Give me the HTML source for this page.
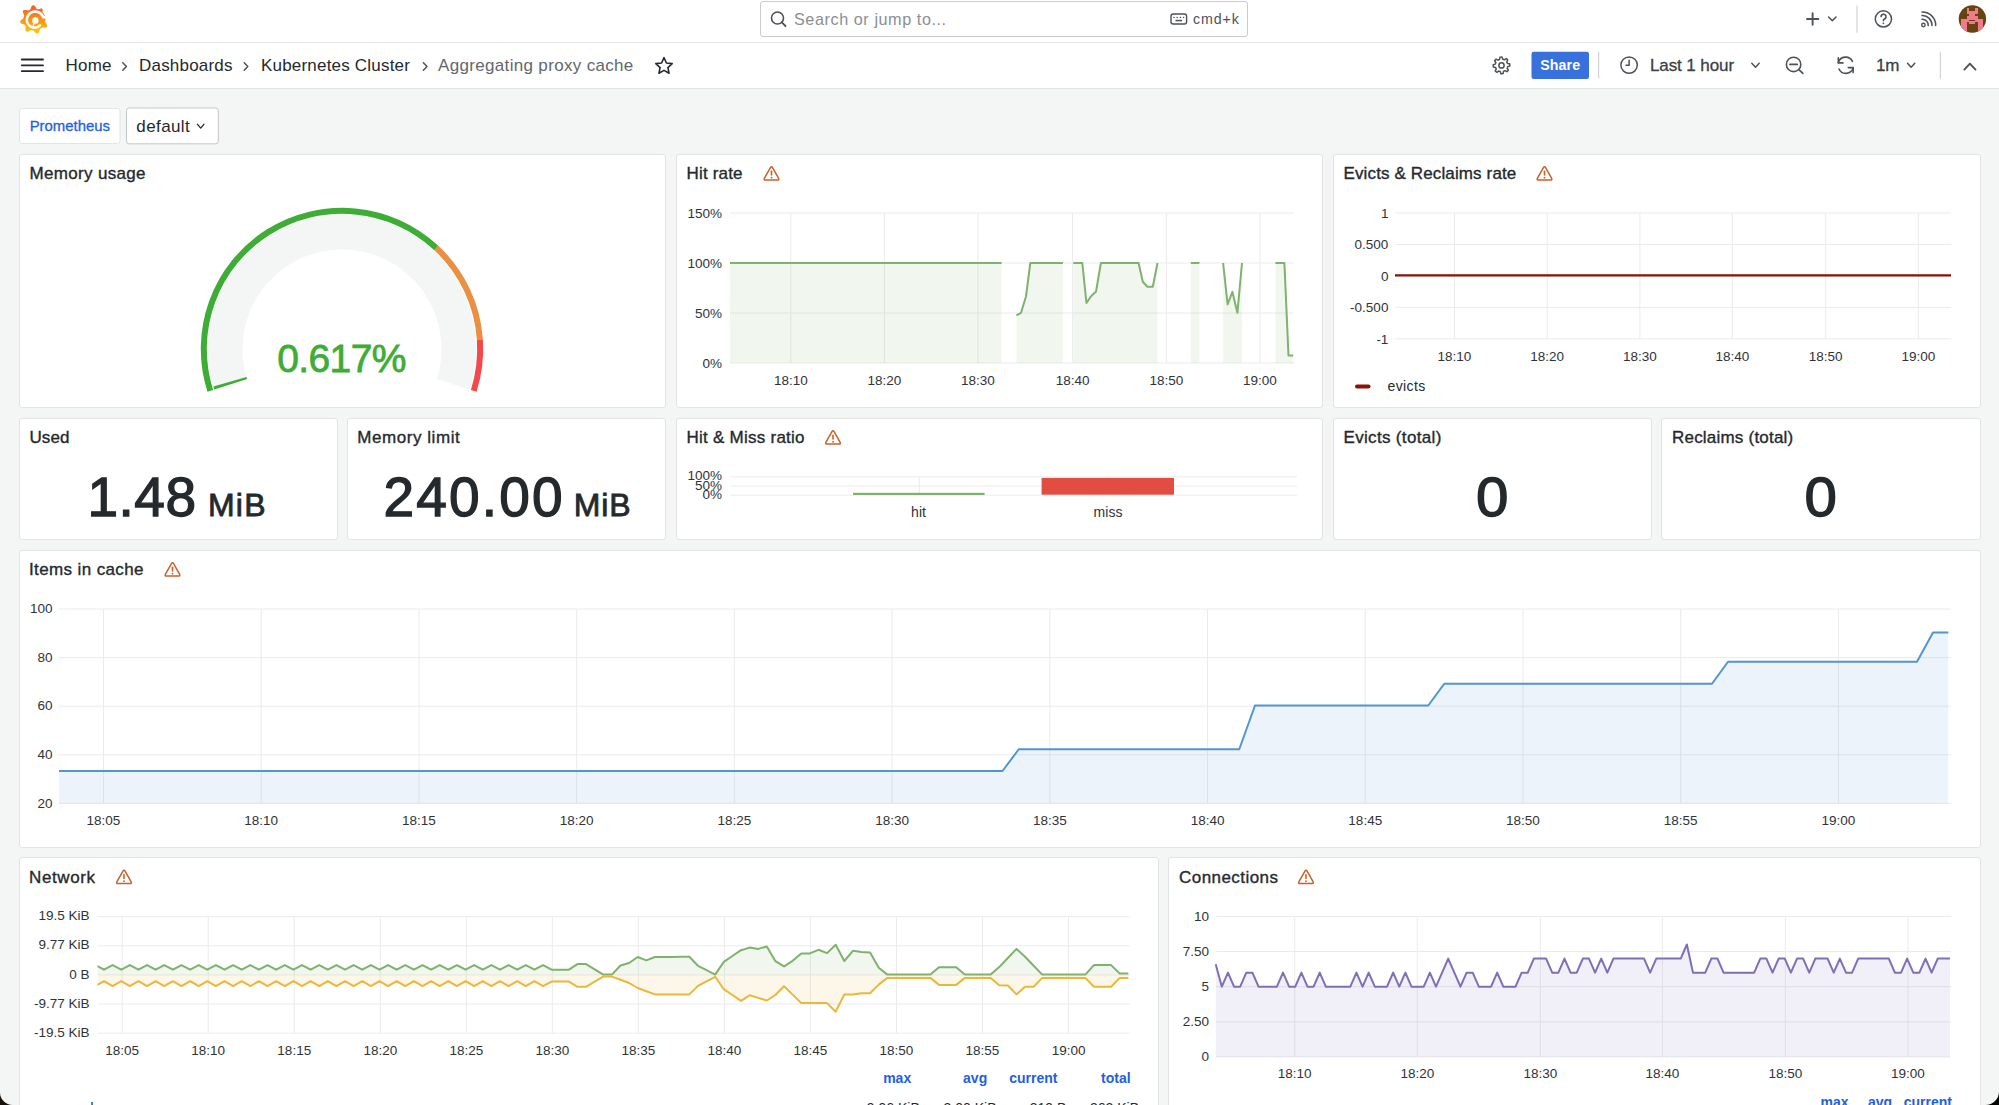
<!DOCTYPE html>
<html><head><meta charset="utf-8"><title>Aggregating proxy cache - Dashboards - Grafana</title>
<style>
html,body{margin:0;padding:0}
body{width:1999px;height:1105px;overflow:hidden;background:#f4f5f5;position:relative;font-family:"Liberation Sans",sans-serif}
svg text{font-family:"Liberation Sans",sans-serif}
.ttl{stroke:#24292e;stroke-width:0.35px}
</style></head><body>
<svg width="1999" height="1105" viewBox="0 0 1999 1105" style="position:absolute;left:0;top:0"><rect x="0" y="0" width="1999" height="89" fill="#fff"/><line x1="0" y1="42.5" x2="1999" y2="42.5" stroke="#e3e4e6" stroke-width="1"/><line x1="0" y1="88.5" x2="1999" y2="88.5" stroke="#e3e4e6" stroke-width="1"/><defs><linearGradient id="lg" x1="0" y1="0" x2="0" y2="1"><stop offset="0" stop-color="#f05a28"/><stop offset="1" stop-color="#fbca0a"/></linearGradient></defs><polygon points="21.73,19.60 22.02,19.38 22.31,19.18 22.60,18.98 22.87,18.79 23.13,18.61 23.34,18.44 23.48,18.26 23.51,18.07 23.54,17.88 23.57,17.69 23.60,17.50 23.64,17.31 23.68,17.13 23.73,16.94 23.77,16.75 23.83,16.57 23.88,16.38 23.94,16.20 24.00,16.02 24.06,15.84 24.13,15.66 24.20,15.48 24.16,15.25 24.06,15.00 23.93,14.72 23.78,14.42 23.62,14.11 23.46,13.79 23.32,13.46 23.18,13.12 23.06,12.79 22.97,12.46 22.90,12.13 22.87,11.82 22.86,11.52 22.90,11.24 22.96,10.98 23.07,10.75 23.21,10.54 23.38,10.36 23.59,10.21 23.83,10.09 24.10,10.00 24.39,9.94 24.71,9.91 25.04,9.90 25.38,9.93 25.73,9.97 26.09,10.04 26.44,10.11 26.79,10.20 27.12,10.29 27.45,10.37 27.75,10.44 28.02,10.49 28.25,10.48 28.41,10.37 28.57,10.27 28.73,10.17 28.90,10.07 29.07,9.98 29.24,9.89 29.41,9.80 29.58,9.71 29.75,9.63 29.93,9.55 30.10,9.47 30.28,9.40 30.41,9.22 30.53,8.97 30.64,8.68 30.75,8.36 30.86,8.03 30.99,7.70 31.12,7.36 31.27,7.03 31.42,6.71 31.60,6.42 31.78,6.14 31.98,5.90 32.20,5.69 32.42,5.52 32.65,5.39 32.90,5.30 33.14,5.25 33.40,5.26 33.65,5.30 33.90,5.39 34.15,5.52 34.40,5.69 34.64,5.89 34.87,6.13 35.09,6.39 35.30,6.68 35.50,6.97 35.69,7.28 35.87,7.59 36.04,7.90 36.21,8.19 36.37,8.45 36.52,8.68 36.69,8.84 36.87,8.88 37.06,8.93 37.25,8.97 37.43,9.03 37.62,9.08 37.80,9.14 37.98,9.20 38.16,9.26 38.34,9.33 38.52,9.40 38.75,9.36 39.01,9.25 39.29,9.12 39.58,8.98 39.89,8.83 40.20,8.70 40.51,8.58 40.81,8.49 41.11,8.44 41.39,8.42 41.65,8.44 41.88,8.51 42.09,8.62 42.26,8.78 42.41,8.98 42.52,9.21 42.60,9.48 42.65,9.77 42.67,10.09 42.66,10.42 42.64,10.76 42.61,11.10 42.58,11.42 42.55,11.73 42.54,12.01 42.57,12.24 42.70,12.38 42.83,12.53 42.95,12.68 43.07,12.83 43.18,12.98 43.30,13.13 43.41,13.29 43.52,13.45 43.63,13.61 43.73,13.77 43.83,13.93 43.93,14.10 44.02,14.27 44.11,14.44 44.20,14.61 44.29,14.78 44.37,14.95 44.45,15.13 44.53,15.30 44.60,15.48 44.67,15.66 44.74,15.84 44.80,16.02 44.86,16.20 44.92,16.38 44.97,16.57 45.03,16.75 45.07,16.94 45.12,17.13 45.16,17.31 45.20,17.50 45.23,17.69 45.26,17.88 45.29,18.07 45.32,18.26 45.34,18.45 45.36,18.64 45.37,18.83 45.38,19.02 45.39,19.22 45.40,19.41 45.40,19.60 45.40,19.79 45.39,19.98 45.38,20.18 45.37,20.37 45.36,20.56 45.34,20.75 45.32,20.94 45.29,21.13 45.26,21.32 45.23,21.51 45.20,21.70 45.16,21.89 45.24,22.10 45.38,22.34 45.56,22.59 45.76,22.86 45.97,23.14 46.18,23.43 46.38,23.73 46.57,24.03 46.75,24.34 46.90,24.65 47.02,24.96 47.11,25.26 47.16,25.55 47.18,25.83 47.16,26.10 47.10,26.35 46.99,26.58 46.85,26.79 46.67,26.97 46.46,27.14 46.21,27.27 45.93,27.38 45.63,27.46 45.30,27.52 44.96,27.56 44.61,27.58 44.25,27.58 43.89,27.56 43.53,27.54 43.18,27.51 42.85,27.48 42.54,27.46 42.26,27.46 42.04,27.51 41.90,27.64 41.76,27.77 41.62,27.90 41.47,28.03 41.32,28.15 41.17,28.27 41.02,28.38 40.87,28.50 40.71,28.61 40.55,28.72 40.39,28.83 40.23,28.93 40.07,29.03 39.90,29.13 39.79,29.33 39.71,29.59 39.65,29.89 39.58,30.22 39.51,30.56 39.44,30.91 39.35,31.27 39.25,31.61 39.14,31.95 39.01,32.27 38.86,32.56 38.70,32.83 38.52,33.07 38.32,33.27 38.11,33.43 37.88,33.55 37.64,33.63 37.39,33.67 37.13,33.66 36.87,33.60 36.60,33.51 36.34,33.38 36.07,33.21 35.81,33.01 35.55,32.78 35.30,32.52 35.06,32.26 34.83,31.98 34.61,31.70 34.40,31.42 34.20,31.15 34.01,30.91 33.82,30.71 33.63,30.57 33.44,30.56 33.25,30.54 33.06,30.52 32.87,30.49 32.68,30.46 32.49,30.43 32.30,30.40 32.11,30.36 31.93,30.32 31.74,30.27 31.55,30.23 31.37,30.17 31.18,30.12 31.00,30.06 30.78,30.12 30.53,30.23 30.26,30.39 29.97,30.56 29.67,30.74 29.36,30.91 29.04,31.09 28.72,31.24 28.40,31.38 28.07,31.50 27.75,31.59 27.44,31.65 27.15,31.67 26.86,31.66 26.60,31.61 26.36,31.52 26.14,31.40 25.95,31.23 25.78,31.04 25.65,30.81 25.54,30.54 25.46,30.26 25.41,29.95 25.38,29.62 25.38,29.27 25.40,28.92 25.44,28.56 25.49,28.20 25.55,27.85 25.62,27.51 25.68,27.18 25.73,26.87 25.76,26.60 25.73,26.37 25.62,26.22 25.50,26.07 25.39,25.91 25.28,25.75 25.17,25.59 25.07,25.43 24.97,25.27 24.87,25.10 24.78,24.93 24.69,24.76 24.60,24.59 24.40,24.48 24.14,24.38 23.84,24.30 23.52,24.22 23.18,24.13 22.84,24.04 22.49,23.93 22.15,23.82 21.82,23.69 21.51,23.54 21.22,23.38 20.96,23.20 20.74,23.01 20.54,22.80 20.39,22.58 20.28,22.34 20.22,22.10 20.20,21.85 20.22,21.59 20.29,21.33 20.39,21.07 20.54,20.81 20.72,20.56 20.94,20.31 21.18,20.06 21.45,19.83" fill="url(#lg)"/><polyline points="47.13,17.40 43.17,17.31 43.04,16.96 42.89,16.62 42.73,16.29 42.56,15.96 42.37,15.64 42.16,15.33 41.95,15.03 41.72,14.74 41.48,14.46 41.23,14.19 40.96,13.93 40.69,13.68 40.41,13.45 40.11,13.23 39.81,13.02 39.50,12.82 39.18,12.64 38.86,12.47 38.53,12.32 38.19,12.18 37.85,12.06 37.50,11.95 37.15,11.85 36.80,11.78 36.44,11.71 36.08,11.67 35.72,11.63 35.36,11.62 35.00,11.61 34.64,11.63 34.29,11.66 33.93,11.70 33.58,11.76 33.23,11.84 32.88,11.93 32.54,12.03 32.20,12.15 31.87,12.28 31.55,12.43 31.23,12.59 30.92,12.76 30.62,12.95 30.33,13.15 30.05,13.36 29.77,13.58 29.51,13.82 29.26,14.06 29.02,14.32 28.79,14.58 28.57,14.86 28.36,15.14 28.17,15.43 27.99,15.73 27.82,16.03 27.67,16.35 27.53,16.67 27.40,16.99 27.29,17.32 27.19,17.65 27.11,17.98 27.04,18.32 26.98,18.66 26.94,19.01 26.92,19.35 26.91,19.69 26.92,20.03 26.93,20.38 26.97,20.72 27.02,21.06 27.08,21.39 27.16,21.72 27.25,22.05 27.36,22.37 27.47,22.69 27.61,23.00 27.75,23.31 27.91,23.61 28.08,23.90 28.26,24.18 28.46,24.46 28.66,24.72 28.88,24.98 29.11,25.22 29.34,25.46 29.59,25.69 29.85,25.90 30.11,26.10 30.38,26.29 30.66,26.47 30.95,26.64 31.24,26.79 31.54,26.93 31.85,27.06 32.16,27.18 32.47,27.28 32.79,27.36 33.11,27.44 33.43,27.50 33.76,27.54 34.08,27.57 34.41,27.59 34.73,27.59 35.06,27.58 35.38,27.56 35.71,27.52 36.03,27.47 36.34,27.40 36.66,27.32 36.97,27.23 37.27,27.12 37.57,27.01 37.87,26.87 38.15,26.73 38.43,26.58 38.71,26.41 38.97,26.23 39.23,26.04 39.48,25.84 39.72,25.63 39.95,25.41" fill="none" stroke="#fff" stroke-width="2.6" stroke-linecap="round" stroke-linejoin="round"/><circle cx="35.4" cy="20.5" r="3.2" fill="#fff"/><line x1="33.96605890912238" y1="22.54788011072248" x2="33.22728175818771" y2="25.877666356487367" stroke="#fff" stroke-width="1.3"/><rect x="760.5" y="1.5" width="487" height="35" rx="2.5" fill="#fff" stroke="#c9cacc" stroke-width="1"/><circle cx="777.5" cy="18" r="6" fill="none" stroke="#4d5258" stroke-width="1.6"/><line x1="781.8" y1="22.3" x2="785.5" y2="26" stroke="#4d5258" stroke-width="1.8" stroke-linecap="round"/><text x="794" y="24.7" font-size="16.2" fill="#8b8e93" text-anchor="start" font-weight="400" letter-spacing="0.57" >Search or jump to...</text><rect x="1171" y="14" width="15.6" height="10" rx="2.2" fill="none" stroke="#4d5258" stroke-width="1.4"/><rect x="1173.3000000000002" y="16.8" width="1.3" height="1.3" fill="#4d5258"/><rect x="1176.5" y="16.8" width="1.3" height="1.3" fill="#4d5258"/><rect x="1179.7" y="16.8" width="1.3" height="1.3" fill="#4d5258"/><rect x="1182.9" y="16.8" width="1.3" height="1.3" fill="#4d5258"/><rect x="1175.5" y="19.8" width="6.6" height="1.5" fill="#4d5258"/><text x="1193" y="23.6" font-size="14.2" fill="#4d5258" text-anchor="start" font-weight="400" letter-spacing="0.9" >cmd+k</text><path d="M1812.6,13.3 V24.8 M1807,19 H1818.3" stroke="#4d5258" stroke-width="1.9" stroke-linecap="round"/><path d="M1828.6,17 L1832.3,20.8 L1836,17" fill="none" stroke="#4d5258" stroke-width="1.5" stroke-linecap="round" stroke-linejoin="round"/><line x1="1857" y1="5.6" x2="1857" y2="32.7" stroke="#d2d3d5" stroke-width="1.2"/><circle cx="1883.4" cy="18.9" r="8.1" fill="none" stroke="#4d5258" stroke-width="1.5"/><path d="M1881,16.6 A2.5,2.5 0 1 1 1884,19.2 Q1883.4,19.6 1883.4,20.8" fill="none" stroke="#4d5258" stroke-width="1.5" stroke-linecap="round"/><circle cx="1883.4" cy="23.3" r="0.9" fill="#4d5258"/><circle cx="1923.4" cy="25" r="1.7" fill="none" stroke="#4d5258" stroke-width="1.4"/><path d="M1922,19.3 A5.8,5.8 0 0 1 1928.2,25.6 M1922,15.6 A9.6,9.6 0 0 1 1932,25.6 M1922,12 A13.3,13.3 0 0 1 1935.7,25.6" fill="none" stroke="#4d5258" stroke-width="1.5" stroke-linecap="round"/><clipPath id="av"><circle cx="1972.4" cy="19" r="13.7"/></clipPath><g clip-path="url(#av)"><rect x="1958" y="4" width="29" height="30" fill="#67430f"/><g shape-rendering="crispEdges"><rect x="1966.64" y="8.00" width="2.82" height="2.82" fill="#f07a8e"/><rect x="1974.80" y="8.00" width="2.82" height="2.82" fill="#f07a8e"/><rect x="1966.64" y="10.72" width="10.98" height="2.82" fill="#f07a8e"/><rect x="1969.36" y="13.44" width="5.54" height="2.82" fill="#f07a8e"/><rect x="1966.64" y="16.16" width="10.98" height="2.82" fill="#f07a8e"/><rect x="1961.20" y="18.88" width="21.86" height="2.82" fill="#f07a8e"/><rect x="1961.20" y="21.60" width="5.54" height="13.70" fill="#f07a8e"/><rect x="1977.52" y="21.60" width="5.54" height="13.70" fill="#f07a8e"/><rect x="1969.36" y="19.5" width="5.44" height="1.7" fill="#67430f"/><rect x="1969.36" y="22.2" width="5.44" height="2.0" fill="#f07a8e"/></g></g><line x1="21.8" y1="59.5" x2="43" y2="59.5" stroke="#24292e" stroke-width="1.8" stroke-linecap="round"/><line x1="21.8" y1="65.3" x2="43" y2="65.3" stroke="#24292e" stroke-width="1.8" stroke-linecap="round"/><line x1="21.8" y1="71.2" x2="43" y2="71.2" stroke="#24292e" stroke-width="1.8" stroke-linecap="round"/><text x="65.5" y="71.2" font-size="17" fill="#24292e" text-anchor="start" font-weight="400" letter-spacing="0.2" >Home</text><text x="139" y="71.2" font-size="17" fill="#24292e" text-anchor="start" font-weight="400" letter-spacing="0.2" >Dashboards</text><text x="261" y="71.2" font-size="17" fill="#24292e" text-anchor="start" font-weight="400" letter-spacing="0.2" >Kubernetes Cluster</text><text x="438" y="71.2" font-size="17" fill="#62676d" text-anchor="start" font-weight="400" letter-spacing="0.33" >Aggregating proxy cache</text><path d="M122.8,62.8 L126.39999999999999,66.5 L122.8,70.2" fill="none" stroke="#4d5258" stroke-width="1.5" stroke-linecap="round" stroke-linejoin="round"/><path d="M244.2,62.8 L247.79999999999998,66.5 L244.2,70.2" fill="none" stroke="#4d5258" stroke-width="1.5" stroke-linecap="round" stroke-linejoin="round"/><path d="M423.4,62.8 L427.0,66.5 L423.4,70.2" fill="none" stroke="#4d5258" stroke-width="1.5" stroke-linecap="round" stroke-linejoin="round"/><polygon points="664.00,57.70 666.41,62.98 672.18,63.64 667.90,67.57 669.05,73.26 664.00,70.40 658.95,73.26 660.10,67.57 655.82,63.64 661.59,62.98" fill="none" stroke="#24292e" stroke-width="1.6" stroke-linejoin="round"/><polygon points="1509.65,63.82 1509.78,64.89 1509.78,65.98 1507.67,66.66 1507.46,67.45 1507.14,68.21 1508.38,70.04 1507.72,70.90 1506.95,71.66 1504.98,70.65 1504.26,71.06 1503.50,71.37 1503.08,73.55 1502.01,73.68 1500.92,73.68 1500.24,71.57 1499.45,71.36 1498.69,71.04 1496.86,72.28 1496.00,71.62 1495.24,70.85 1496.25,68.88 1495.84,68.16 1495.53,67.40 1493.35,66.98 1493.22,65.91 1493.22,64.82 1495.33,64.14 1495.54,63.35 1495.86,62.59 1494.62,60.76 1495.28,59.90 1496.05,59.14 1498.02,60.15 1498.74,59.74 1499.50,59.43 1499.92,57.25 1500.99,57.12 1502.08,57.12 1502.76,59.23 1503.55,59.44 1504.31,59.76 1506.14,58.52 1507.00,59.18 1507.76,59.95 1506.75,61.92 1507.16,62.64 1507.47,63.40" fill="none" stroke="#4d5258" stroke-width="1.5" stroke-linejoin="round"/><circle cx="1501.5" cy="65.4" r="2.6" fill="none" stroke="#4d5258" stroke-width="1.5"/><rect x="1531.5" y="51.8" width="57.5" height="27.1" rx="2.2" fill="#3871dc"/><text x="1560.2" y="70.3" font-size="14.2" fill="#fff" text-anchor="middle" font-weight="700" letter-spacing="0.1" >Share</text><line x1="1598.6" y1="51.8" x2="1598.6" y2="78.6" stroke="#d2d3d5" stroke-width="1.2"/><circle cx="1629.1" cy="65.1" r="8.2" fill="none" stroke="#4d5258" stroke-width="1.5"/><path d="M1629.1,60.3 V65.3 H1626" fill="none" stroke="#4d5258" stroke-width="1.5" stroke-linecap="round"/><text x="1650" y="71.2" font-size="17" fill="#3b4046" text-anchor="start" font-weight="400" letter-spacing="-0.1" stroke="#3b4046" stroke-width="0.3">Last 1 hour</text><path d="M1751.8,63.3 L1755.5,67.3 L1759.2,63.3" fill="none" stroke="#4d5258" stroke-width="1.5" stroke-linecap="round" stroke-linejoin="round"/><circle cx="1793.6" cy="64.4" r="7.2" fill="none" stroke="#4d5258" stroke-width="1.6"/><path d="M1789.9,64.4 H1797.3 M1798.8,69.6 L1802.9,73.3" fill="none" stroke="#4d5258" stroke-width="1.7" stroke-linecap="round"/><path d="M1838.3,62.6 A7.6,7.6 0 0 1 1852.4,61.3 M1853.2,67.8 A7.6,7.6 0 0 1 1839,69.0" fill="none" stroke="#4d5258" stroke-width="1.6" stroke-linecap="round"/><path d="M1838.3,57.8 V62.9 H1843" fill="none" stroke="#4d5258" stroke-width="1.6" stroke-linecap="round" stroke-linejoin="round"/><path d="M1853.1,72.6 V67.6 H1848.3" fill="none" stroke="#4d5258" stroke-width="1.6" stroke-linecap="round" stroke-linejoin="round"/><text x="1876" y="71.2" font-size="17" fill="#3b4046" text-anchor="start" font-weight="400" letter-spacing="-0.2" stroke="#3b4046" stroke-width="0.3">1m</text><path d="M1907.5,63.3 L1911.15,67.3 L1914.8,63.3" fill="none" stroke="#4d5258" stroke-width="1.5" stroke-linecap="round" stroke-linejoin="round"/><line x1="1940.4" y1="51.9" x2="1940.4" y2="78.7" stroke="#d2d3d5" stroke-width="1.2"/><path d="M1964.3,69.6 L1969.9,63.7 L1975.5,69.6" fill="none" stroke="#4d5258" stroke-width="1.9" stroke-linecap="round" stroke-linejoin="round"/><rect x="19.5" y="108.5" width="100.5" height="35" rx="2.5" fill="#fff" stroke="#e2e3e5" stroke-width="1"/><text x="29.7" y="130.8" font-size="14.9" fill="#1f62e0" text-anchor="start" font-weight="400" stroke="#1f62e0" stroke-width="0.3">Prometheus</text><rect x="126.5" y="108" width="91.8" height="35.8" rx="2.5" fill="#fff" stroke="#c4c6c9" stroke-width="1"/><text x="136.3" y="131.5" font-size="17" fill="#24292e" text-anchor="start" font-weight="400" letter-spacing="0.4" >default</text><path d="M197.5,124.3 L200.7,128.1 L203.9,124.3" fill="none" stroke="#24292e" stroke-width="1.3" stroke-linecap="round" stroke-linejoin="round"/><rect x="19.5" y="154.5" width="646" height="253" rx="2.5" fill="#fff" stroke="#e2e3e6" stroke-width="1"/><rect x="676.5" y="154.5" width="646" height="253" rx="2.5" fill="#fff" stroke="#e2e3e6" stroke-width="1"/><rect x="1333.5" y="154.5" width="647" height="253" rx="2.5" fill="#fff" stroke="#e2e3e6" stroke-width="1"/><rect x="19.5" y="418.5" width="318" height="121" rx="2.5" fill="#fff" stroke="#e2e3e6" stroke-width="1"/><rect x="347.5" y="418.5" width="318" height="121" rx="2.5" fill="#fff" stroke="#e2e3e6" stroke-width="1"/><rect x="676.5" y="418.5" width="646" height="121" rx="2.5" fill="#fff" stroke="#e2e3e6" stroke-width="1"/><rect x="1333.5" y="418.5" width="318" height="121" rx="2.5" fill="#fff" stroke="#e2e3e6" stroke-width="1"/><rect x="1661.5" y="418.5" width="319" height="121" rx="2.5" fill="#fff" stroke="#e2e3e6" stroke-width="1"/><rect x="19.5" y="550.5" width="1961" height="297" rx="2.5" fill="#fff" stroke="#e2e3e6" stroke-width="1"/><rect x="19.5" y="857.5" width="1139" height="262" rx="2.5" fill="#fff" stroke="#e2e3e6" stroke-width="1"/><rect x="1168.5" y="857.5" width="812" height="262" rx="2.5" fill="#fff" stroke="#e2e3e6" stroke-width="1"/><text x="29.5" y="179.4" font-size="17" fill="#24292e" text-anchor="start" font-weight="400" letter-spacing="0.33" class="ttl">Memory usage</text><path d="M214.27,389.52 A134,134 0 1 1 469.73,389.52 L436.84,379.09 A99.5,99.5 0 1 0 247.16,379.09 Z" fill="#f4f5f5"/><path d="M207.41,391.69 A141.2,141.2 0 0 1 438.37,245.80 L434.28,250.19 A135.2,135.2 0 0 0 213.13,389.88 Z" fill="#3dad36"/><path d="M438.37,245.80 A141.2,141.2 0 0 1 482.87,339.35 L476.88,339.76 A135.2,135.2 0 0 0 434.28,250.19 Z" fill="#eb8f43"/><path d="M482.87,339.35 A141.2,141.2 0 0 1 476.59,391.69 L470.87,389.88 A135.2,135.2 0 0 0 476.88,339.76 Z" fill="#f2494c"/><path d="M214.27,389.52 A134,134 0 0 1 213.37,386.55 L246.49,376.88 A99.5,99.5 0 0 0 247.16,379.09 Z" fill="#3dad36"/><text x="341.5" y="372.0" font-size="39" fill="#3dad36" text-anchor="middle" font-weight="400" letter-spacing="-0.6" stroke="#3dad36" stroke-width="0.8">0.617%</text><text x="686.5" y="179.4" font-size="17" fill="#24292e" text-anchor="start" font-weight="400" letter-spacing="0.17" class="ttl">Hit rate</text><g transform="translate(763,165.5)" fill="none" stroke="#c8612a" stroke-width="1.5" stroke-linejoin="round"><path d="M7.42,2.21 Q8.5,0.3 9.58,2.21 L15.52,12.69 Q16.6,14.6 14.40,14.60 L2.60,14.60 Q0.4,14.6 1.48,12.69 Z"/><line x1="8.5" y1="5.8" x2="8.5" y2="9.4" stroke-linecap="round" stroke-width="1.6"/><circle cx="8.5" cy="12.2" r="0.9" fill="#c8612a" stroke="none"/></g><line x1="730" y1="213" x2="1294" y2="213" stroke="#ebebeb" stroke-width="1"/><text x="722" y="217.8" font-size="13.5" fill="#2f3338" text-anchor="end" font-weight="400" >150%</text><line x1="730" y1="263" x2="1294" y2="263" stroke="#ebebeb" stroke-width="1"/><text x="722" y="267.8" font-size="13.5" fill="#2f3338" text-anchor="end" font-weight="400" >100%</text><line x1="730" y1="313" x2="1294" y2="313" stroke="#ebebeb" stroke-width="1"/><text x="722" y="317.8" font-size="13.5" fill="#2f3338" text-anchor="end" font-weight="400" >50%</text><line x1="730" y1="363" x2="1294" y2="363" stroke="#ebebeb" stroke-width="1"/><text x="722" y="367.8" font-size="13.5" fill="#2f3338" text-anchor="end" font-weight="400" >0%</text><line x1="790.8" y1="213" x2="790.8" y2="363" stroke="#ebebeb" stroke-width="1"/><text x="790.8" y="385" font-size="13.5" fill="#2f3338" text-anchor="middle" font-weight="400" >18:10</text><line x1="884.5" y1="213" x2="884.5" y2="363" stroke="#ebebeb" stroke-width="1"/><text x="884.5" y="385" font-size="13.5" fill="#2f3338" text-anchor="middle" font-weight="400" >18:20</text><line x1="978" y1="213" x2="978" y2="363" stroke="#ebebeb" stroke-width="1"/><text x="978" y="385" font-size="13.5" fill="#2f3338" text-anchor="middle" font-weight="400" >18:30</text><line x1="1072.6" y1="213" x2="1072.6" y2="363" stroke="#ebebeb" stroke-width="1"/><text x="1072.6" y="385" font-size="13.5" fill="#2f3338" text-anchor="middle" font-weight="400" >18:40</text><line x1="1166.4" y1="213" x2="1166.4" y2="363" stroke="#ebebeb" stroke-width="1"/><text x="1166.4" y="385" font-size="13.5" fill="#2f3338" text-anchor="middle" font-weight="400" >18:50</text><line x1="1260" y1="213" x2="1260" y2="363" stroke="#ebebeb" stroke-width="1"/><text x="1260" y="385" font-size="13.5" fill="#2f3338" text-anchor="middle" font-weight="400" >19:00</text><polygon points="730.00,363.00 730.00,263.00 1001.60,263.00 1001.60,363.00" fill="rgba(126,178,109,0.11)" stroke="none"/><polyline points="730.00,263.00 1001.60,263.00" fill="none" stroke="#7eb26d" stroke-width="2" stroke-linejoin="round"/><polygon points="1016.40,363.00 1016.40,315.40 1021.00,312.80 1026.00,296.50 1030.30,263.00 1062.90,263.00 1062.90,363.00" fill="rgba(126,178,109,0.11)" stroke="none"/><polyline points="1016.40,315.40 1021.00,312.80 1026.00,296.50 1030.30,263.00 1062.90,263.00" fill="none" stroke="#7eb26d" stroke-width="2" stroke-linejoin="round"/><polygon points="1073.30,363.00 1073.30,263.00 1082.30,263.00 1086.50,303.00 1090.80,296.50 1096.00,291.60 1100.90,263.00 1138.60,263.00 1142.80,281.80 1147.40,286.80 1152.80,286.80 1157.50,263.00 1157.50,363.00" fill="rgba(126,178,109,0.11)" stroke="none"/><polyline points="1073.30,263.00 1082.30,263.00 1086.50,303.00 1090.80,296.50 1096.00,291.60 1100.90,263.00 1138.60,263.00 1142.80,281.80 1147.40,286.80 1152.80,286.80 1157.50,263.00" fill="none" stroke="#7eb26d" stroke-width="2" stroke-linejoin="round"/><polygon points="1190.80,363.00 1190.80,263.00 1199.40,263.00 1199.40,363.00" fill="rgba(126,178,109,0.11)" stroke="none"/><polyline points="1190.80,263.00 1199.40,263.00" fill="none" stroke="#7eb26d" stroke-width="2" stroke-linejoin="round"/><polygon points="1223.10,363.00 1223.10,263.00 1227.60,304.30 1232.40,291.90 1237.40,312.80 1242.00,263.00 1242.00,363.00" fill="rgba(126,178,109,0.11)" stroke="none"/><polyline points="1223.10,263.00 1227.60,304.30 1232.40,291.90 1237.40,312.80 1242.00,263.00" fill="none" stroke="#7eb26d" stroke-width="2" stroke-linejoin="round"/><polygon points="1275.40,363.00 1275.40,263.00 1284.40,263.00 1288.50,355.50 1293.20,355.50 1293.20,363.00" fill="rgba(126,178,109,0.11)" stroke="none"/><polyline points="1275.40,263.00 1284.40,263.00 1288.50,355.50 1293.20,355.50" fill="none" stroke="#7eb26d" stroke-width="2" stroke-linejoin="round"/><text x="1343.5" y="179.4" font-size="17" fill="#24292e" text-anchor="start" font-weight="400" letter-spacing="0.13" class="ttl">Evicts &amp; Reclaims rate</text><g transform="translate(1536,165.5)" fill="none" stroke="#c8612a" stroke-width="1.5" stroke-linejoin="round"><path d="M7.42,2.21 Q8.5,0.3 9.58,2.21 L15.52,12.69 Q16.6,14.6 14.40,14.60 L2.60,14.60 Q0.4,14.6 1.48,12.69 Z"/><line x1="8.5" y1="5.8" x2="8.5" y2="9.4" stroke-linecap="round" stroke-width="1.6"/><circle cx="8.5" cy="12.2" r="0.9" fill="#c8612a" stroke="none"/></g><line x1="1395" y1="213.0" x2="1951" y2="213.0" stroke="#ebebeb" stroke-width="1"/><text x="1388.4" y="217.8" font-size="13.5" fill="#2f3338" text-anchor="end" font-weight="400" >1</text><line x1="1395" y1="244.45" x2="1951" y2="244.45" stroke="#ebebeb" stroke-width="1"/><text x="1388.4" y="249.25" font-size="13.5" fill="#2f3338" text-anchor="end" font-weight="400" >0.500</text><line x1="1395" y1="275.9" x2="1951" y2="275.9" stroke="#ebebeb" stroke-width="1"/><text x="1388.4" y="280.7" font-size="13.5" fill="#2f3338" text-anchor="end" font-weight="400" >0</text><line x1="1395" y1="307.35" x2="1951" y2="307.35" stroke="#ebebeb" stroke-width="1"/><text x="1388.4" y="312.15000000000003" font-size="13.5" fill="#2f3338" text-anchor="end" font-weight="400" >-0.500</text><line x1="1395" y1="338.8" x2="1951" y2="338.8" stroke="#ebebeb" stroke-width="1"/><text x="1388.4" y="343.6" font-size="13.5" fill="#2f3338" text-anchor="end" font-weight="400" >-1</text><line x1="1454.5" y1="213" x2="1454.5" y2="338.8" stroke="#ebebeb" stroke-width="1"/><text x="1454.5" y="361" font-size="13.5" fill="#2f3338" text-anchor="middle" font-weight="400" >18:10</text><line x1="1547.2" y1="213" x2="1547.2" y2="338.8" stroke="#ebebeb" stroke-width="1"/><text x="1547.2" y="361" font-size="13.5" fill="#2f3338" text-anchor="middle" font-weight="400" >18:20</text><line x1="1639.9" y1="213" x2="1639.9" y2="338.8" stroke="#ebebeb" stroke-width="1"/><text x="1639.9" y="361" font-size="13.5" fill="#2f3338" text-anchor="middle" font-weight="400" >18:30</text><line x1="1732.3" y1="213" x2="1732.3" y2="338.8" stroke="#ebebeb" stroke-width="1"/><text x="1732.3" y="361" font-size="13.5" fill="#2f3338" text-anchor="middle" font-weight="400" >18:40</text><line x1="1825.7" y1="213" x2="1825.7" y2="338.8" stroke="#ebebeb" stroke-width="1"/><text x="1825.7" y="361" font-size="13.5" fill="#2f3338" text-anchor="middle" font-weight="400" >18:50</text><line x1="1918.4" y1="213" x2="1918.4" y2="338.8" stroke="#ebebeb" stroke-width="1"/><text x="1918.4" y="361" font-size="13.5" fill="#2f3338" text-anchor="middle" font-weight="400" >19:00</text><line x1="1395" y1="275.4" x2="1951" y2="275.4" stroke="#8a1208" stroke-width="2.2"/><line x1="1357" y1="386.5" x2="1368.5" y2="386.5" stroke="#8a1208" stroke-width="4" stroke-linecap="round"/><text x="1387.5" y="391.3" font-size="14" fill="#24292e" text-anchor="start" font-weight="400" letter-spacing="0.4" >evicts</text><text x="29.5" y="443.3" font-size="17" fill="#24292e" text-anchor="start" font-weight="400" letter-spacing="0.05" class="ttl">Used</text><text x="357.3" y="443.3" font-size="17" fill="#24292e" text-anchor="start" font-weight="400" letter-spacing="0.55" class="ttl">Memory limit</text><text x="1343.5" y="443.3" font-size="17" fill="#24292e" text-anchor="start" font-weight="400" letter-spacing="0.33" class="ttl">Evicts (total)</text><text x="1672" y="443.3" font-size="17" fill="#24292e" text-anchor="start" font-weight="400" letter-spacing="0.21" class="ttl">Reclaims (total)</text><text x="87.5" y="515.9" font-size="55" fill="#24292e" text-anchor="start" font-weight="400" letter-spacing="0.5" stroke="#24292e" stroke-width="1.3">1.48</text><text x="208" y="515.9" font-size="32" fill="#24292e" text-anchor="start" font-weight="400" letter-spacing="1.2" stroke="#24292e" stroke-width="0.8">MiB</text><text x="383.4" y="515.9" font-size="55" fill="#24292e" text-anchor="start" font-weight="400" letter-spacing="2.2" stroke="#24292e" stroke-width="1.3">240.00</text><text x="573.8" y="515.9" font-size="32" fill="#24292e" text-anchor="start" font-weight="400" letter-spacing="0.9" stroke="#24292e" stroke-width="0.8">MiB</text><text x="0" y="0" font-size="55" fill="#24292e" stroke="#24292e" stroke-width="1.3" text-anchor="middle" transform="translate(1492.3,515.9) scale(1.06,1)">0</text><text x="0" y="0" font-size="55" fill="#24292e" stroke="#24292e" stroke-width="1.3" text-anchor="middle" transform="translate(1820.6,515.9) scale(1.06,1)">0</text><text x="686.5" y="443.3" font-size="17" fill="#24292e" text-anchor="start" font-weight="400" letter-spacing="0.25" class="ttl">Hit &amp; Miss ratio</text><g transform="translate(824.5,429.5)" fill="none" stroke="#c8612a" stroke-width="1.5" stroke-linejoin="round"><path d="M7.42,2.21 Q8.5,0.3 9.58,2.21 L15.52,12.69 Q16.6,14.6 14.40,14.60 L2.60,14.60 Q0.4,14.6 1.48,12.69 Z"/><line x1="8.5" y1="5.8" x2="8.5" y2="9.4" stroke-linecap="round" stroke-width="1.6"/><circle cx="8.5" cy="12.2" r="0.9" fill="#c8612a" stroke="none"/></g><line x1="730" y1="476.8" x2="1297" y2="476.8" stroke="#ebebeb" stroke-width="1"/><line x1="730" y1="486.1" x2="1297" y2="486.1" stroke="#ebebeb" stroke-width="1"/><line x1="730" y1="495.2" x2="1297" y2="495.2" stroke="#ebebeb" stroke-width="1"/><line x1="919.3" y1="476.8" x2="919.3" y2="495.2" stroke="#ebebeb" stroke-width="1"/><line x1="1108" y1="476.8" x2="1108" y2="478" stroke="#ebebeb" stroke-width="1"/><text x="722" y="480.4" font-size="13.5" fill="#2f3338" text-anchor="end" font-weight="400" >100%</text><text x="722" y="489.5" font-size="13.5" fill="#2f3338" text-anchor="end" font-weight="400" >50%</text><text x="722" y="499.0" font-size="13.5" fill="#2f3338" text-anchor="end" font-weight="400" >0%</text><rect x="853" y="492.8" width="131.6" height="2.2" fill="#7eb26d"/><rect x="1041.6" y="477.9" width="132.4" height="16.8" fill="#e24d42"/><text x="918.5" y="516.8" font-size="14" fill="#2f3338" text-anchor="middle" font-weight="400" >hit</text><text x="1108" y="516.8" font-size="14" fill="#2f3338" text-anchor="middle" font-weight="400" >miss</text><text x="29" y="575.2" font-size="17" fill="#24292e" text-anchor="start" font-weight="400" letter-spacing="0.38" class="ttl">Items in cache</text><g transform="translate(164,561.5)" fill="none" stroke="#c8612a" stroke-width="1.5" stroke-linejoin="round"><path d="M7.42,2.21 Q8.5,0.3 9.58,2.21 L15.52,12.69 Q16.6,14.6 14.40,14.60 L2.60,14.60 Q0.4,14.6 1.48,12.69 Z"/><line x1="8.5" y1="5.8" x2="8.5" y2="9.4" stroke-linecap="round" stroke-width="1.6"/><circle cx="8.5" cy="12.2" r="0.9" fill="#c8612a" stroke="none"/></g><line x1="59" y1="609.0" x2="1951" y2="609.0" stroke="#ebebeb" stroke-width="1"/><text x="52.5" y="613.1" font-size="13.5" fill="#2f3338" text-anchor="end" font-weight="400" >100</text><line x1="59" y1="657.6" x2="1951" y2="657.6" stroke="#ebebeb" stroke-width="1"/><text x="52.5" y="661.7" font-size="13.5" fill="#2f3338" text-anchor="end" font-weight="400" >80</text><line x1="59" y1="706.2" x2="1951" y2="706.2" stroke="#ebebeb" stroke-width="1"/><text x="52.5" y="710.3000000000001" font-size="13.5" fill="#2f3338" text-anchor="end" font-weight="400" >60</text><line x1="59" y1="754.8" x2="1951" y2="754.8" stroke="#ebebeb" stroke-width="1"/><text x="52.5" y="758.9" font-size="13.5" fill="#2f3338" text-anchor="end" font-weight="400" >40</text><line x1="59" y1="803.4" x2="1951" y2="803.4" stroke="#ebebeb" stroke-width="1"/><text x="52.5" y="807.5" font-size="13.5" fill="#2f3338" text-anchor="end" font-weight="400" >20</text><line x1="103.5" y1="609" x2="103.5" y2="803.4" stroke="#ebebeb" stroke-width="1"/><text x="103.5" y="824.8" font-size="13.5" fill="#2f3338" text-anchor="middle" font-weight="400" >18:05</text><line x1="261.22" y1="609" x2="261.22" y2="803.4" stroke="#ebebeb" stroke-width="1"/><text x="261.22" y="824.8" font-size="13.5" fill="#2f3338" text-anchor="middle" font-weight="400" >18:10</text><line x1="418.94" y1="609" x2="418.94" y2="803.4" stroke="#ebebeb" stroke-width="1"/><text x="418.94" y="824.8" font-size="13.5" fill="#2f3338" text-anchor="middle" font-weight="400" >18:15</text><line x1="576.66" y1="609" x2="576.66" y2="803.4" stroke="#ebebeb" stroke-width="1"/><text x="576.66" y="824.8" font-size="13.5" fill="#2f3338" text-anchor="middle" font-weight="400" >18:20</text><line x1="734.38" y1="609" x2="734.38" y2="803.4" stroke="#ebebeb" stroke-width="1"/><text x="734.38" y="824.8" font-size="13.5" fill="#2f3338" text-anchor="middle" font-weight="400" >18:25</text><line x1="892.1" y1="609" x2="892.1" y2="803.4" stroke="#ebebeb" stroke-width="1"/><text x="892.1" y="824.8" font-size="13.5" fill="#2f3338" text-anchor="middle" font-weight="400" >18:30</text><line x1="1049.82" y1="609" x2="1049.82" y2="803.4" stroke="#ebebeb" stroke-width="1"/><text x="1049.82" y="824.8" font-size="13.5" fill="#2f3338" text-anchor="middle" font-weight="400" >18:35</text><line x1="1207.54" y1="609" x2="1207.54" y2="803.4" stroke="#ebebeb" stroke-width="1"/><text x="1207.54" y="824.8" font-size="13.5" fill="#2f3338" text-anchor="middle" font-weight="400" >18:40</text><line x1="1365.26" y1="609" x2="1365.26" y2="803.4" stroke="#ebebeb" stroke-width="1"/><text x="1365.26" y="824.8" font-size="13.5" fill="#2f3338" text-anchor="middle" font-weight="400" >18:45</text><line x1="1522.98" y1="609" x2="1522.98" y2="803.4" stroke="#ebebeb" stroke-width="1"/><text x="1522.98" y="824.8" font-size="13.5" fill="#2f3338" text-anchor="middle" font-weight="400" >18:50</text><line x1="1680.7" y1="609" x2="1680.7" y2="803.4" stroke="#ebebeb" stroke-width="1"/><text x="1680.7" y="824.8" font-size="13.5" fill="#2f3338" text-anchor="middle" font-weight="400" >18:55</text><line x1="1838.42" y1="609" x2="1838.42" y2="803.4" stroke="#ebebeb" stroke-width="1"/><text x="1838.42" y="824.8" font-size="13.5" fill="#2f3338" text-anchor="middle" font-weight="400" >19:00</text><polygon points="59.00,803.40 59.00,771.00 1002.50,771.00 1018.75,749.25 1239.25,749.25 1255.00,705.50 1428.25,705.50 1444.25,683.75 1712.00,683.75 1728.00,661.75 1917.00,661.75 1933.00,632.50 1948.25,632.50 1948.25,803.40" fill="rgba(80,150,208,0.11)" stroke="none"/><polyline points="59.00,771.00 1002.50,771.00 1018.75,749.25 1239.25,749.25 1255.00,705.50 1428.25,705.50 1444.25,683.75 1712.00,683.75 1728.00,661.75 1917.00,661.75 1933.00,632.50 1948.25,632.50" fill="none" stroke="#5096d0" stroke-width="2" stroke-linejoin="round"/><text x="29" y="883" font-size="17" fill="#24292e" text-anchor="start" font-weight="400" letter-spacing="0.6" class="ttl">Network</text><g transform="translate(115.5,869)" fill="none" stroke="#c8612a" stroke-width="1.5" stroke-linejoin="round"><path d="M7.42,2.21 Q8.5,0.3 9.58,2.21 L15.52,12.69 Q16.6,14.6 14.40,14.60 L2.60,14.60 Q0.4,14.6 1.48,12.69 Z"/><line x1="8.5" y1="5.8" x2="8.5" y2="9.4" stroke-linecap="round" stroke-width="1.6"/><circle cx="8.5" cy="12.2" r="0.9" fill="#c8612a" stroke="none"/></g><line x1="97.6" y1="916.7" x2="1129.6" y2="916.7" stroke="#ebebeb" stroke-width="1"/><text x="89.5" y="920.3000000000001" font-size="13.5" fill="#2f3338" text-anchor="end" font-weight="400" >19.5 KiB</text><line x1="97.6" y1="945.82" x2="1129.6" y2="945.82" stroke="#ebebeb" stroke-width="1"/><text x="89.5" y="949.4200000000001" font-size="13.5" fill="#2f3338" text-anchor="end" font-weight="400" >9.77 KiB</text><line x1="97.6" y1="974.94" x2="1129.6" y2="974.94" stroke="#ebebeb" stroke-width="1"/><text x="89.5" y="978.5400000000001" font-size="13.5" fill="#2f3338" text-anchor="end" font-weight="400" >0 B</text><line x1="97.6" y1="1004.0600000000001" x2="1129.6" y2="1004.0600000000001" stroke="#ebebeb" stroke-width="1"/><text x="89.5" y="1007.6600000000001" font-size="13.5" fill="#2f3338" text-anchor="end" font-weight="400" >-9.77 KiB</text><line x1="97.6" y1="1033.18" x2="1129.6" y2="1033.18" stroke="#ebebeb" stroke-width="1"/><text x="89.5" y="1036.78" font-size="13.5" fill="#2f3338" text-anchor="end" font-weight="400" >-19.5 KiB</text><line x1="122.2" y1="916.7" x2="122.2" y2="1033.2" stroke="#ebebeb" stroke-width="1"/><text x="122.2" y="1055" font-size="13.5" fill="#2f3338" text-anchor="middle" font-weight="400" >18:05</text><line x1="208.23000000000002" y1="916.7" x2="208.23000000000002" y2="1033.2" stroke="#ebebeb" stroke-width="1"/><text x="208.23000000000002" y="1055" font-size="13.5" fill="#2f3338" text-anchor="middle" font-weight="400" >18:10</text><line x1="294.26" y1="916.7" x2="294.26" y2="1033.2" stroke="#ebebeb" stroke-width="1"/><text x="294.26" y="1055" font-size="13.5" fill="#2f3338" text-anchor="middle" font-weight="400" >18:15</text><line x1="380.29" y1="916.7" x2="380.29" y2="1033.2" stroke="#ebebeb" stroke-width="1"/><text x="380.29" y="1055" font-size="13.5" fill="#2f3338" text-anchor="middle" font-weight="400" >18:20</text><line x1="466.32" y1="916.7" x2="466.32" y2="1033.2" stroke="#ebebeb" stroke-width="1"/><text x="466.32" y="1055" font-size="13.5" fill="#2f3338" text-anchor="middle" font-weight="400" >18:25</text><line x1="552.35" y1="916.7" x2="552.35" y2="1033.2" stroke="#ebebeb" stroke-width="1"/><text x="552.35" y="1055" font-size="13.5" fill="#2f3338" text-anchor="middle" font-weight="400" >18:30</text><line x1="638.3800000000001" y1="916.7" x2="638.3800000000001" y2="1033.2" stroke="#ebebeb" stroke-width="1"/><text x="638.3800000000001" y="1055" font-size="13.5" fill="#2f3338" text-anchor="middle" font-weight="400" >18:35</text><line x1="724.4100000000001" y1="916.7" x2="724.4100000000001" y2="1033.2" stroke="#ebebeb" stroke-width="1"/><text x="724.4100000000001" y="1055" font-size="13.5" fill="#2f3338" text-anchor="middle" font-weight="400" >18:40</text><line x1="810.44" y1="916.7" x2="810.44" y2="1033.2" stroke="#ebebeb" stroke-width="1"/><text x="810.44" y="1055" font-size="13.5" fill="#2f3338" text-anchor="middle" font-weight="400" >18:45</text><line x1="896.47" y1="916.7" x2="896.47" y2="1033.2" stroke="#ebebeb" stroke-width="1"/><text x="896.47" y="1055" font-size="13.5" fill="#2f3338" text-anchor="middle" font-weight="400" >18:50</text><line x1="982.5" y1="916.7" x2="982.5" y2="1033.2" stroke="#ebebeb" stroke-width="1"/><text x="982.5" y="1055" font-size="13.5" fill="#2f3338" text-anchor="middle" font-weight="400" >18:55</text><line x1="1068.53" y1="916.7" x2="1068.53" y2="1033.2" stroke="#ebebeb" stroke-width="1"/><text x="1068.53" y="1055" font-size="13.5" fill="#2f3338" text-anchor="middle" font-weight="400" >19:00</text><clipPath id="netclip"><rect x="97.6" y="900" width="1032" height="150"/></clipPath><g clip-path="url(#netclip)"><polygon points="95.40,974.60 95.40,965.10 104.01,969.70 112.62,965.10 121.22,969.70 129.83,965.10 138.44,969.70 147.05,965.10 155.66,969.70 164.26,965.10 172.87,969.70 181.48,965.10 190.09,969.70 198.70,965.10 207.30,969.70 215.91,965.10 224.52,969.70 233.13,965.10 241.74,969.70 250.34,965.10 258.95,969.70 267.56,965.10 276.17,969.70 284.78,965.10 293.38,969.70 301.99,965.10 310.60,969.70 319.21,965.10 327.82,969.70 336.42,965.10 345.03,969.70 353.64,965.10 362.25,969.70 370.86,965.10 379.46,969.70 388.07,965.10 396.68,969.70 405.29,965.10 413.90,969.70 422.50,965.10 431.11,969.70 439.72,965.10 448.33,969.70 456.94,965.10 465.54,969.70 474.15,965.10 482.76,969.70 491.37,965.10 499.98,969.70 508.58,965.10 517.19,969.70 525.80,965.10 534.41,969.70 543.02,965.10 551.62,969.70 560.23,969.70 568.84,969.70 577.45,964.10 586.06,964.10 594.66,969.30 603.27,974.60 611.88,974.60 620.49,965.50 629.10,963.00 637.70,957.00 646.31,960.40 654.92,957.00 663.53,957.00 672.14,957.00 680.74,956.70 689.35,956.70 697.96,965.80 706.57,970.20 715.18,974.60 723.78,961.90 732.39,956.00 741.00,950.20 749.61,947.60 758.22,948.90 766.82,946.50 775.43,961.20 784.04,966.40 792.65,960.80 801.26,953.40 809.86,953.40 818.47,949.80 827.08,953.10 835.69,944.70 844.30,961.00 852.90,950.80 861.51,952.10 870.12,952.40 878.73,967.70 887.34,974.60 895.94,974.60 904.55,974.60 913.16,974.60 921.77,974.60 930.38,974.60 938.98,967.30 947.59,967.30 956.20,967.30 964.81,974.60 973.42,974.60 982.02,974.60 990.63,974.60 999.24,967.10 1007.85,958.00 1016.46,948.90 1025.06,956.70 1033.67,965.80 1042.28,974.60 1050.89,974.60 1059.50,974.60 1068.10,974.60 1076.71,974.60 1085.32,974.60 1093.93,965.10 1102.54,965.10 1111.14,965.10 1119.75,973.60 1128.36,973.60 1128.36,974.60" fill="rgba(126,178,109,0.11)" stroke="none"/><polyline points="95.40,965.10 104.01,969.70 112.62,965.10 121.22,969.70 129.83,965.10 138.44,969.70 147.05,965.10 155.66,969.70 164.26,965.10 172.87,969.70 181.48,965.10 190.09,969.70 198.70,965.10 207.30,969.70 215.91,965.10 224.52,969.70 233.13,965.10 241.74,969.70 250.34,965.10 258.95,969.70 267.56,965.10 276.17,969.70 284.78,965.10 293.38,969.70 301.99,965.10 310.60,969.70 319.21,965.10 327.82,969.70 336.42,965.10 345.03,969.70 353.64,965.10 362.25,969.70 370.86,965.10 379.46,969.70 388.07,965.10 396.68,969.70 405.29,965.10 413.90,969.70 422.50,965.10 431.11,969.70 439.72,965.10 448.33,969.70 456.94,965.10 465.54,969.70 474.15,965.10 482.76,969.70 491.37,965.10 499.98,969.70 508.58,965.10 517.19,969.70 525.80,965.10 534.41,969.70 543.02,965.10 551.62,969.70 560.23,969.70 568.84,969.70 577.45,964.10 586.06,964.10 594.66,969.30 603.27,974.60 611.88,974.60 620.49,965.50 629.10,963.00 637.70,957.00 646.31,960.40 654.92,957.00 663.53,957.00 672.14,957.00 680.74,956.70 689.35,956.70 697.96,965.80 706.57,970.20 715.18,974.60 723.78,961.90 732.39,956.00 741.00,950.20 749.61,947.60 758.22,948.90 766.82,946.50 775.43,961.20 784.04,966.40 792.65,960.80 801.26,953.40 809.86,953.40 818.47,949.80 827.08,953.10 835.69,944.70 844.30,961.00 852.90,950.80 861.51,952.10 870.12,952.40 878.73,967.70 887.34,974.60 895.94,974.60 904.55,974.60 913.16,974.60 921.77,974.60 930.38,974.60 938.98,967.30 947.59,967.30 956.20,967.30 964.81,974.60 973.42,974.60 982.02,974.60 990.63,974.60 999.24,967.10 1007.85,958.00 1016.46,948.90 1025.06,956.70 1033.67,965.80 1042.28,974.60 1050.89,974.60 1059.50,974.60 1068.10,974.60 1076.71,974.60 1085.32,974.60 1093.93,965.10 1102.54,965.10 1111.14,965.10 1119.75,973.60 1128.36,973.60" fill="none" stroke="#7eb26d" stroke-width="2" stroke-linejoin="round"/><polygon points="95.40,974.60 95.40,986.10 104.01,981.20 112.62,986.10 121.22,981.20 129.83,986.10 138.44,981.20 147.05,986.10 155.66,981.20 164.26,986.10 172.87,981.20 181.48,986.10 190.09,981.20 198.70,986.10 207.30,981.20 215.91,986.10 224.52,981.20 233.13,986.10 241.74,981.20 250.34,986.10 258.95,981.20 267.56,986.10 276.17,981.20 284.78,986.10 293.38,981.20 301.99,986.10 310.60,981.20 319.21,986.10 327.82,981.20 336.42,986.10 345.03,981.20 353.64,986.10 362.25,981.20 370.86,986.10 379.46,981.20 388.07,986.10 396.68,981.20 405.29,986.10 413.90,981.20 422.50,986.10 431.11,981.20 439.72,986.10 448.33,981.20 456.94,986.10 465.54,981.20 474.15,986.10 482.76,981.20 491.37,986.10 499.98,981.20 508.58,986.10 517.19,981.20 525.80,986.10 534.41,981.20 543.02,986.10 551.62,981.60 560.23,981.60 568.84,981.60 577.45,986.80 586.06,986.80 594.66,981.70 603.27,976.60 611.88,976.60 620.49,979.80 629.10,983.00 637.70,988.00 646.31,991.30 654.92,994.40 663.53,994.40 672.14,994.40 680.74,994.40 689.35,994.40 697.96,985.90 706.57,981.40 715.18,976.80 723.78,989.20 732.39,995.00 741.00,1000.90 749.61,995.30 758.22,997.90 766.82,1000.50 775.43,995.00 784.04,986.20 792.65,994.60 801.26,1003.10 809.86,1003.10 818.47,1003.10 827.08,1003.10 835.69,1011.70 844.30,994.40 852.90,994.60 861.51,993.30 870.12,993.30 878.73,984.60 887.34,977.90 895.94,977.90 904.55,977.90 913.16,977.90 921.77,977.90 930.38,977.90 938.98,984.90 947.59,984.90 956.20,984.90 964.81,977.90 973.42,977.90 982.02,977.90 990.63,977.90 999.24,985.30 1007.85,985.50 1016.46,994.40 1025.06,986.80 1033.67,986.80 1042.28,977.90 1050.89,977.90 1059.50,977.90 1068.10,977.90 1076.71,977.90 1085.32,977.90 1093.93,986.80 1102.54,986.80 1111.14,986.80 1119.75,977.90 1128.36,977.90 1128.36,974.60" fill="rgba(234,184,57,0.11)" stroke="none"/><polyline points="95.40,986.10 104.01,981.20 112.62,986.10 121.22,981.20 129.83,986.10 138.44,981.20 147.05,986.10 155.66,981.20 164.26,986.10 172.87,981.20 181.48,986.10 190.09,981.20 198.70,986.10 207.30,981.20 215.91,986.10 224.52,981.20 233.13,986.10 241.74,981.20 250.34,986.10 258.95,981.20 267.56,986.10 276.17,981.20 284.78,986.10 293.38,981.20 301.99,986.10 310.60,981.20 319.21,986.10 327.82,981.20 336.42,986.10 345.03,981.20 353.64,986.10 362.25,981.20 370.86,986.10 379.46,981.20 388.07,986.10 396.68,981.20 405.29,986.10 413.90,981.20 422.50,986.10 431.11,981.20 439.72,986.10 448.33,981.20 456.94,986.10 465.54,981.20 474.15,986.10 482.76,981.20 491.37,986.10 499.98,981.20 508.58,986.10 517.19,981.20 525.80,986.10 534.41,981.20 543.02,986.10 551.62,981.60 560.23,981.60 568.84,981.60 577.45,986.80 586.06,986.80 594.66,981.70 603.27,976.60 611.88,976.60 620.49,979.80 629.10,983.00 637.70,988.00 646.31,991.30 654.92,994.40 663.53,994.40 672.14,994.40 680.74,994.40 689.35,994.40 697.96,985.90 706.57,981.40 715.18,976.80 723.78,989.20 732.39,995.00 741.00,1000.90 749.61,995.30 758.22,997.90 766.82,1000.50 775.43,995.00 784.04,986.20 792.65,994.60 801.26,1003.10 809.86,1003.10 818.47,1003.10 827.08,1003.10 835.69,1011.70 844.30,994.40 852.90,994.60 861.51,993.30 870.12,993.30 878.73,984.60 887.34,977.90 895.94,977.90 904.55,977.90 913.16,977.90 921.77,977.90 930.38,977.90 938.98,984.90 947.59,984.90 956.20,984.90 964.81,977.90 973.42,977.90 982.02,977.90 990.63,977.90 999.24,985.30 1007.85,985.50 1016.46,994.40 1025.06,986.80 1033.67,986.80 1042.28,977.90 1050.89,977.90 1059.50,977.90 1068.10,977.90 1076.71,977.90 1085.32,977.90 1093.93,986.80 1102.54,986.80 1111.14,986.80 1119.75,977.90 1128.36,977.90" fill="none" stroke="#eab839" stroke-width="2" stroke-linejoin="round"/></g><text x="911.2" y="1083.4" font-size="14" fill="#1f60e0" text-anchor="end" font-weight="700" >max</text><text x="987.2" y="1083.4" font-size="14" fill="#1f60e0" text-anchor="end" font-weight="700" >avg</text><text x="1057.4" y="1083.4" font-size="14" fill="#1f60e0" text-anchor="end" font-weight="700" >current</text><text x="1130.6" y="1083.4" font-size="14" fill="#1f60e0" text-anchor="end" font-weight="700" >total</text><text x="65.4" y="1112.5" font-size="14" fill="#24292e" text-anchor="start" font-weight="400" >read</text><text x="919.8" y="1112.5" font-size="14" fill="#24292e" text-anchor="end" font-weight="400" >9.96 KiB</text><text x="996.5" y="1112.5" font-size="14" fill="#24292e" text-anchor="end" font-weight="400" >3.00 KiB</text><text x="1066.3" y="1112.5" font-size="14" fill="#24292e" text-anchor="end" font-weight="400" >319 B</text><text x="1139" y="1112.5" font-size="14" fill="#24292e" text-anchor="end" font-weight="400" >362 KiB</text><text x="1179" y="883.4" font-size="17" fill="#24292e" text-anchor="start" font-weight="400" letter-spacing="0.45" class="ttl">Connections</text><g transform="translate(1297.5,869)" fill="none" stroke="#c8612a" stroke-width="1.5" stroke-linejoin="round"><path d="M7.42,2.21 Q8.5,0.3 9.58,2.21 L15.52,12.69 Q16.6,14.6 14.40,14.60 L2.60,14.60 Q0.4,14.6 1.48,12.69 Z"/><line x1="8.5" y1="5.8" x2="8.5" y2="9.4" stroke-linecap="round" stroke-width="1.6"/><circle cx="8.5" cy="12.2" r="0.9" fill="#c8612a" stroke="none"/></g><line x1="1215.8" y1="916.4" x2="1951" y2="916.4" stroke="#ebebeb" stroke-width="1"/><text x="1209" y="920.6999999999999" font-size="13.5" fill="#2f3338" text-anchor="end" font-weight="400" >10</text><line x1="1215.8" y1="951.55" x2="1951" y2="951.55" stroke="#ebebeb" stroke-width="1"/><text x="1209" y="955.8499999999999" font-size="13.5" fill="#2f3338" text-anchor="end" font-weight="400" >7.50</text><line x1="1215.8" y1="986.6999999999999" x2="1951" y2="986.6999999999999" stroke="#ebebeb" stroke-width="1"/><text x="1209" y="990.9999999999999" font-size="13.5" fill="#2f3338" text-anchor="end" font-weight="400" >5</text><line x1="1215.8" y1="1021.8499999999999" x2="1951" y2="1021.8499999999999" stroke="#ebebeb" stroke-width="1"/><text x="1209" y="1026.1499999999999" font-size="13.5" fill="#2f3338" text-anchor="end" font-weight="400" >2.50</text><line x1="1215.8" y1="1057.0" x2="1951" y2="1057.0" stroke="#ebebeb" stroke-width="1"/><text x="1209" y="1061.3" font-size="13.5" fill="#2f3338" text-anchor="end" font-weight="400" >0</text><line x1="1294.7" y1="916.4" x2="1294.7" y2="1057" stroke="#ebebeb" stroke-width="1"/><text x="1294.7" y="1078" font-size="13.5" fill="#2f3338" text-anchor="middle" font-weight="400" >18:10</text><line x1="1417.3" y1="916.4" x2="1417.3" y2="1057" stroke="#ebebeb" stroke-width="1"/><text x="1417.3" y="1078" font-size="13.5" fill="#2f3338" text-anchor="middle" font-weight="400" >18:20</text><line x1="1540.3" y1="916.4" x2="1540.3" y2="1057" stroke="#ebebeb" stroke-width="1"/><text x="1540.3" y="1078" font-size="13.5" fill="#2f3338" text-anchor="middle" font-weight="400" >18:30</text><line x1="1662.4" y1="916.4" x2="1662.4" y2="1057" stroke="#ebebeb" stroke-width="1"/><text x="1662.4" y="1078" font-size="13.5" fill="#2f3338" text-anchor="middle" font-weight="400" >18:40</text><line x1="1785.4" y1="916.4" x2="1785.4" y2="1057" stroke="#ebebeb" stroke-width="1"/><text x="1785.4" y="1078" font-size="13.5" fill="#2f3338" text-anchor="middle" font-weight="400" >18:50</text><line x1="1908" y1="916.4" x2="1908" y2="1057" stroke="#ebebeb" stroke-width="1"/><text x="1908" y="1078" font-size="13.5" fill="#2f3338" text-anchor="middle" font-weight="400" >19:00</text><polygon points="1215.70,1057.00 1215.70,964.20 1221.82,986.70 1227.94,972.64 1234.06,986.70 1240.18,986.70 1246.30,972.64 1252.41,972.64 1258.53,986.70 1264.65,986.70 1270.77,986.70 1276.89,986.70 1283.01,972.64 1289.13,986.70 1295.25,986.70 1301.37,972.64 1307.49,986.70 1313.60,986.70 1319.72,972.64 1325.84,986.70 1331.96,986.70 1338.08,986.70 1344.20,986.70 1350.32,986.70 1356.44,972.64 1362.56,986.70 1368.67,972.64 1374.79,986.70 1380.91,986.70 1387.03,986.70 1393.15,972.64 1399.27,986.70 1405.39,972.64 1411.51,986.70 1417.63,986.70 1423.75,986.70 1429.87,972.64 1435.98,986.70 1442.10,972.64 1448.22,958.58 1454.34,972.64 1460.46,986.70 1466.58,972.64 1472.70,972.64 1478.82,986.70 1484.94,986.70 1491.06,986.70 1497.17,972.64 1503.29,986.70 1509.41,986.70 1515.53,986.70 1521.65,972.64 1527.77,972.64 1533.89,958.58 1540.01,958.58 1546.13,958.58 1552.24,972.64 1558.36,972.64 1564.48,958.58 1570.60,972.64 1576.72,972.64 1582.84,958.58 1588.96,958.58 1595.08,972.64 1601.20,958.58 1607.32,972.64 1613.43,958.58 1619.55,958.58 1625.67,958.58 1631.79,958.58 1637.91,958.58 1644.03,958.58 1650.15,972.64 1656.27,958.58 1662.39,958.58 1668.51,958.58 1674.62,958.58 1680.74,958.58 1686.86,944.52 1692.98,972.64 1699.10,972.64 1705.22,972.64 1711.34,958.58 1717.46,958.58 1723.58,972.64 1729.70,972.64 1735.82,972.64 1741.93,972.64 1748.05,972.64 1754.17,972.64 1760.29,958.58 1766.41,958.58 1772.53,972.64 1778.65,958.58 1784.77,958.58 1790.89,972.64 1797.01,958.58 1803.12,958.58 1809.24,972.64 1815.36,958.58 1821.48,958.58 1827.60,958.58 1833.72,972.64 1839.84,958.58 1845.96,972.64 1852.08,972.64 1858.20,958.58 1864.31,958.58 1870.43,958.58 1876.55,958.58 1882.67,958.58 1888.79,958.58 1894.91,972.64 1901.03,972.64 1907.15,958.58 1913.27,972.64 1919.38,972.64 1925.50,958.58 1931.62,972.64 1937.74,958.58 1943.86,958.58 1949.98,958.58 1949.98,1057.00" fill="rgba(128,110,183,0.11)" stroke="none"/><polyline points="1215.70,964.20 1221.82,986.70 1227.94,972.64 1234.06,986.70 1240.18,986.70 1246.30,972.64 1252.41,972.64 1258.53,986.70 1264.65,986.70 1270.77,986.70 1276.89,986.70 1283.01,972.64 1289.13,986.70 1295.25,986.70 1301.37,972.64 1307.49,986.70 1313.60,986.70 1319.72,972.64 1325.84,986.70 1331.96,986.70 1338.08,986.70 1344.20,986.70 1350.32,986.70 1356.44,972.64 1362.56,986.70 1368.67,972.64 1374.79,986.70 1380.91,986.70 1387.03,986.70 1393.15,972.64 1399.27,986.70 1405.39,972.64 1411.51,986.70 1417.63,986.70 1423.75,986.70 1429.87,972.64 1435.98,986.70 1442.10,972.64 1448.22,958.58 1454.34,972.64 1460.46,986.70 1466.58,972.64 1472.70,972.64 1478.82,986.70 1484.94,986.70 1491.06,986.70 1497.17,972.64 1503.29,986.70 1509.41,986.70 1515.53,986.70 1521.65,972.64 1527.77,972.64 1533.89,958.58 1540.01,958.58 1546.13,958.58 1552.24,972.64 1558.36,972.64 1564.48,958.58 1570.60,972.64 1576.72,972.64 1582.84,958.58 1588.96,958.58 1595.08,972.64 1601.20,958.58 1607.32,972.64 1613.43,958.58 1619.55,958.58 1625.67,958.58 1631.79,958.58 1637.91,958.58 1644.03,958.58 1650.15,972.64 1656.27,958.58 1662.39,958.58 1668.51,958.58 1674.62,958.58 1680.74,958.58 1686.86,944.52 1692.98,972.64 1699.10,972.64 1705.22,972.64 1711.34,958.58 1717.46,958.58 1723.58,972.64 1729.70,972.64 1735.82,972.64 1741.93,972.64 1748.05,972.64 1754.17,972.64 1760.29,958.58 1766.41,958.58 1772.53,972.64 1778.65,958.58 1784.77,958.58 1790.89,972.64 1797.01,958.58 1803.12,958.58 1809.24,972.64 1815.36,958.58 1821.48,958.58 1827.60,958.58 1833.72,972.64 1839.84,958.58 1845.96,972.64 1852.08,972.64 1858.20,958.58 1864.31,958.58 1870.43,958.58 1876.55,958.58 1882.67,958.58 1888.79,958.58 1894.91,972.64 1901.03,972.64 1907.15,958.58 1913.27,972.64 1919.38,972.64 1925.50,958.58 1931.62,972.64 1937.74,958.58 1943.86,958.58 1949.98,958.58" fill="none" stroke="#806eb7" stroke-width="2" stroke-linejoin="round"/><text x="1848.5" y="1106.6" font-size="14" fill="#1f60e0" text-anchor="end" font-weight="700" >max</text><text x="1892" y="1106.6" font-size="14" fill="#1f60e0" text-anchor="end" font-weight="700" >avg</text><text x="1952" y="1106.6" font-size="14" fill="#1f60e0" text-anchor="end" font-weight="700" >current</text><path d="M0,1092.5 A12.5,12.5 0 0 0 12.5,1105 L0,1105 Z" fill="#17130a"/><path d="M1999,1091.5 A13.5,13.5 0 0 1 1985.5,1105 L1999,1105 Z" fill="#050403"/></svg>
</body></html>
